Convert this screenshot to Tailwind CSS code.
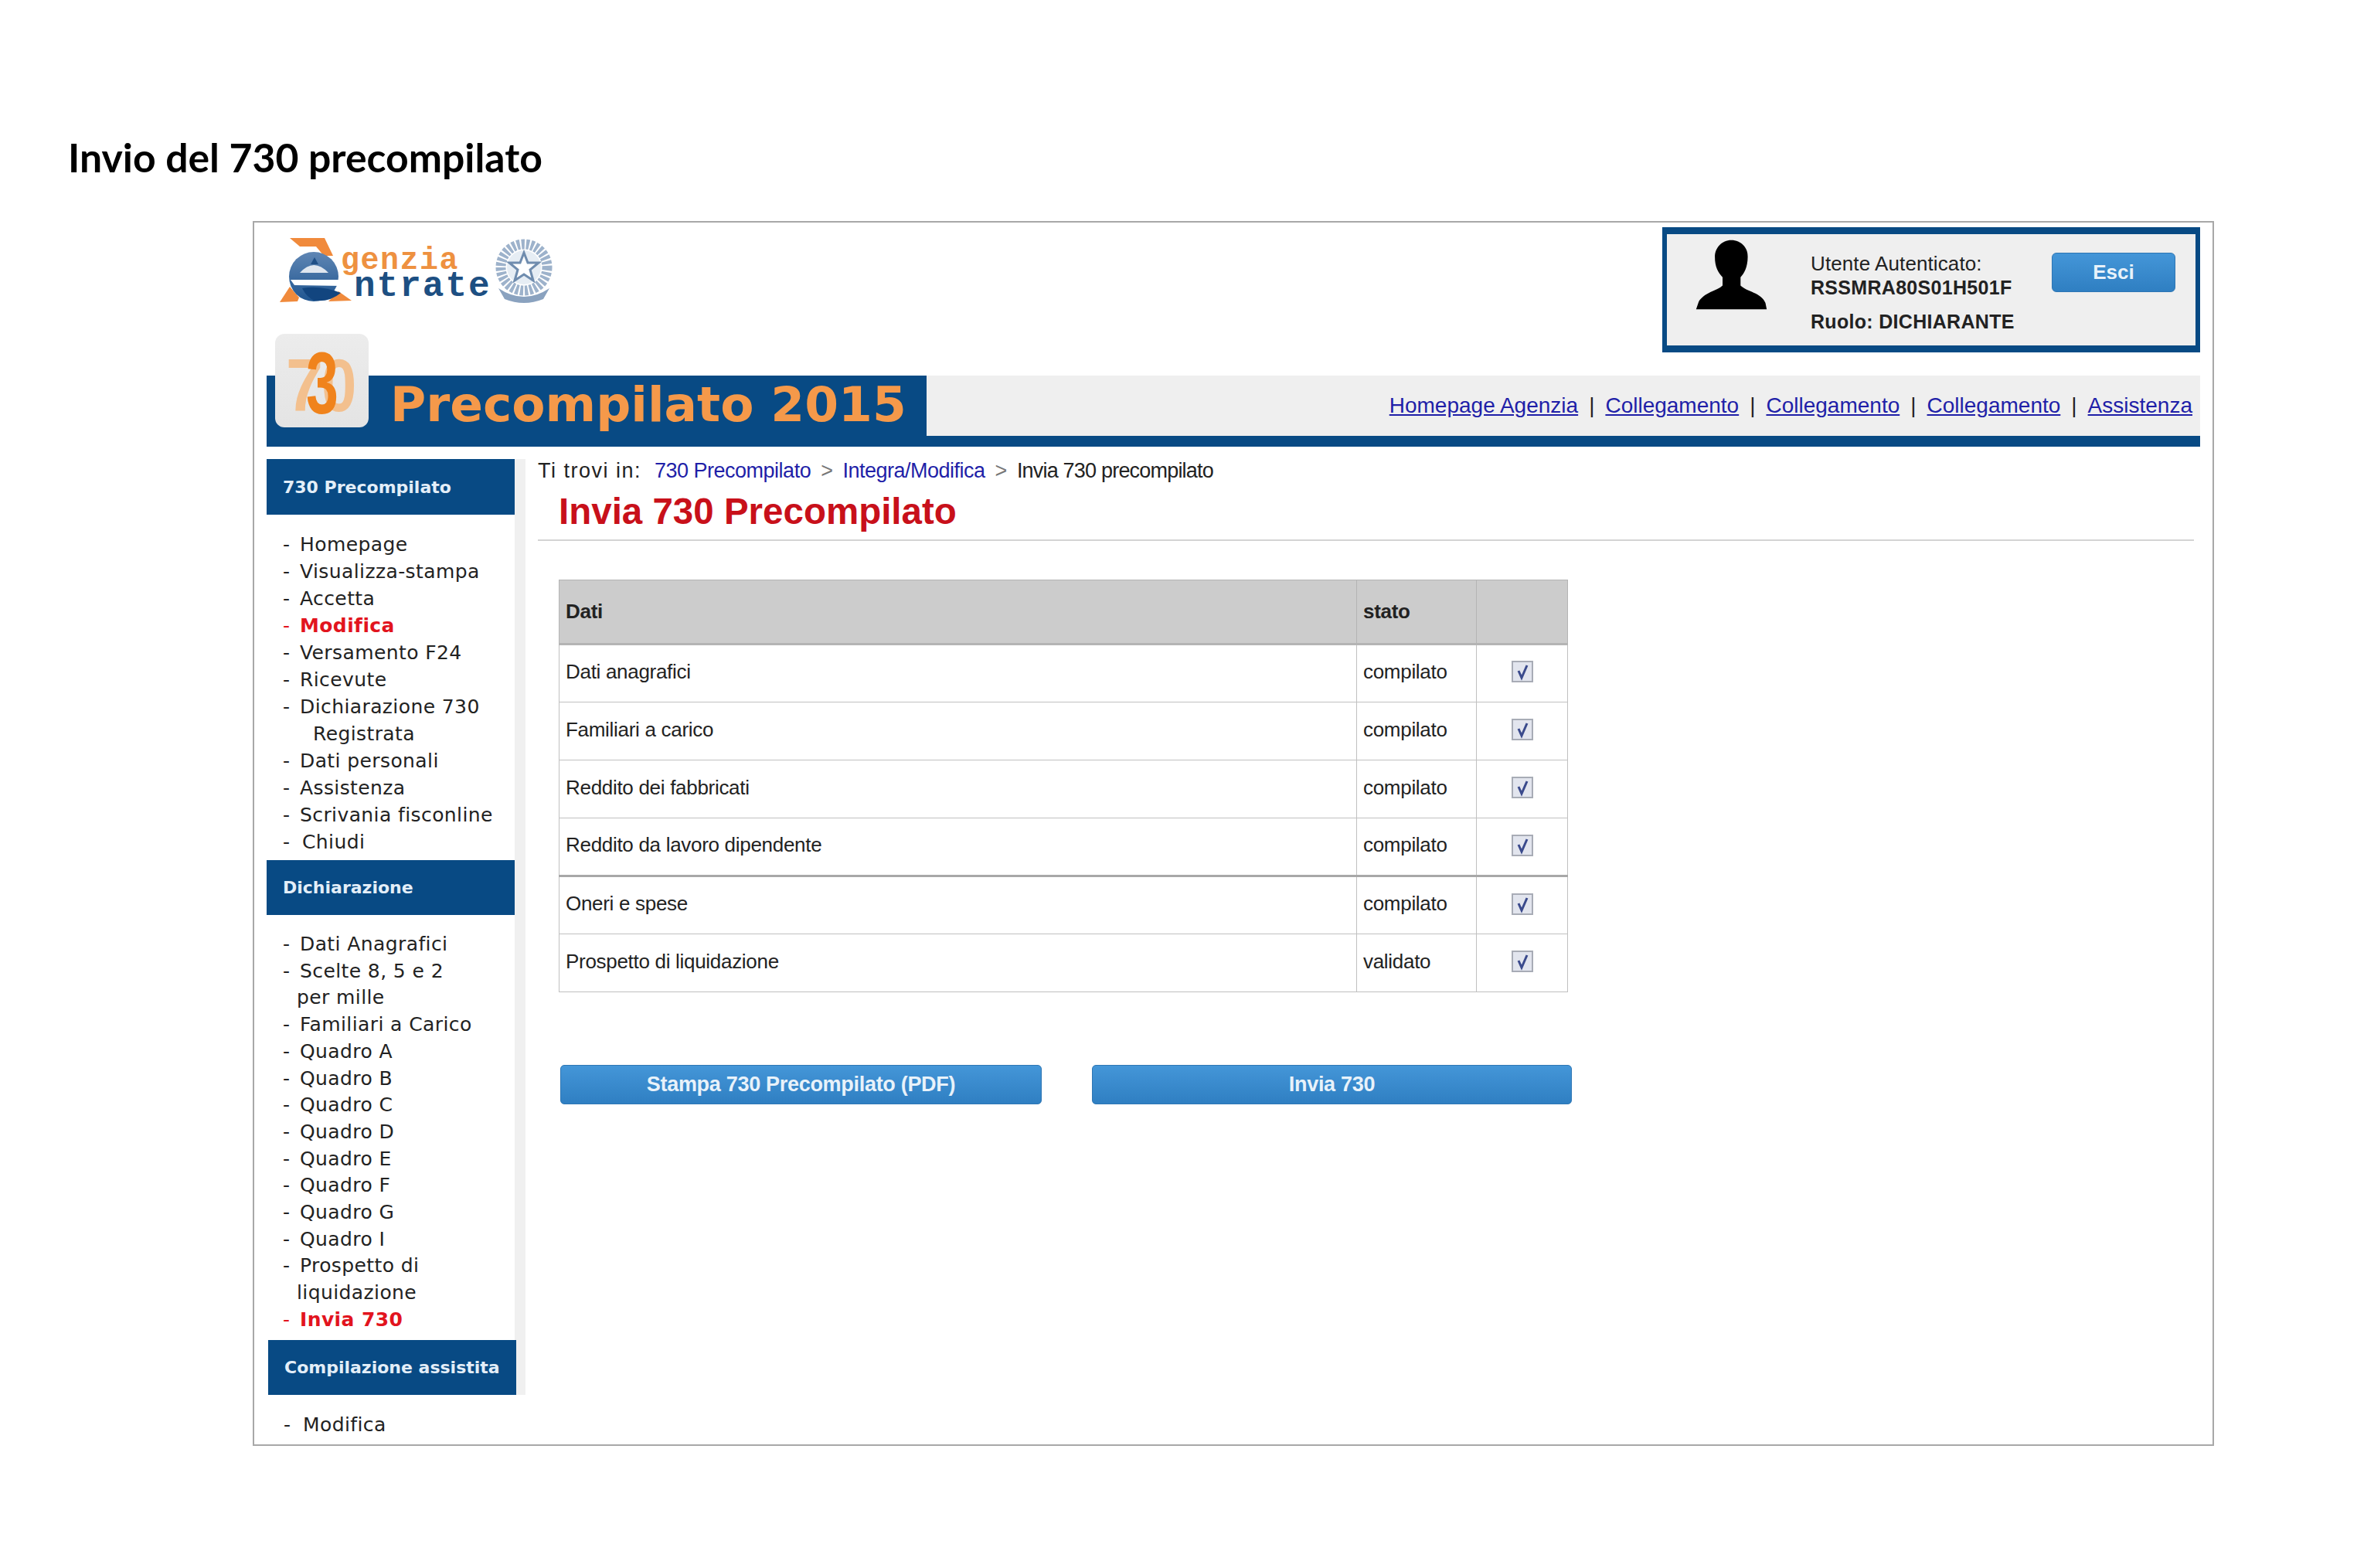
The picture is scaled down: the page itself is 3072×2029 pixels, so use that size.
<!DOCTYPE html>
<html lang="it">
<head>
    <meta charset="UTF-8" />
    <title>Invio del 730 precompilato</title>
    <script src="https://cdn.jsdelivr.net/npm/@tailwindcss/browser@4"></script>
</head>
<body class="bg-white w-[3072px] h-[2029px] overflow-hidden font-['Liberation_Sans',sans-serif] text-[#222]">

<h1 class="h-[286px] pl-[88px] pt-[168px] font-['Lato',sans-serif] font-bold text-[51.7px] leading-[70px] text-black">Invio del 730 precompilato</h1>

<div class="ml-[327px] w-[2538px] h-[1585px] border-2 border-[#a8a8a8] px-4">

    <!-- intestazione -->
    <div class="flex justify-between items-start h-[198px] pt-[6px]">
        <svg class="mt-px" width="390" height="115" viewBox="0 0 390 115">
            <defs>
                <linearGradient id="globo" x1="0" y1="0" x2="0" y2="1">
                    <stop offset="0" stop-color="#5f86b4"/>
                    <stop offset="1" stop-color="#1f5590"/>
                </linearGradient>
            </defs>
            <polygon points="30,13 75,13 86,36 74,36 64,24 43,24" fill="#f08a3c"/>
            <polygon points="17,96 30,76 42,90 40,95" fill="#f08a3c"/>
            <polygon points="93,82 110,94 80,95" fill="#f08a3c"/>
            <circle cx="61" cy="63" r="32" fill="url(#globo)"/>
            <path d="M43 58 Q61 38 80 58 Z" fill="#dfe6ef"/>
            <polygon points="62,38 67,47 57,47" fill="#1f4f86"/>
            <path d="M31 67 L97 67 L97 75 L36 74 Z" fill="#ffffff"/>
            <path d="M46 78 Q70 74 96 84 Q82 96 62 94 Q52 90 46 78 Z" fill="#12457f"/>
            <text x="96" y="53" font-family="Liberation Mono" font-weight="700" font-size="40" letter-spacing="1.5" fill="#ee9140">genzia</text>
            <text x="113" y="88" font-family="Liberation Mono" font-weight="700" font-size="46" letter-spacing="2" fill="#1d4f82">ntrate</text>
            <circle cx="333" cy="51" r="30" fill="none" stroke="#9db2cb" stroke-width="13" stroke-dasharray="4 2"/>
            <circle cx="333" cy="51" r="22" fill="#e6edf4"/>
            <polygon points="333,32 338,45 352,45 341,54 345,68 333,60 321,68 325,54 314,45 328,45" fill="#fff" stroke="#6f8cae" stroke-width="3"/>
            <path d="M300 78 Q333 100 366 78 L358 92 Q333 102 308 92 Z" fill="#8aa2bf"/>
        </svg>

        <div class="w-[696px] h-[162px] border-x-[6px] border-y-[9px] border-[#084a84] bg-[#efefef] flex items-start">
            <svg class="ml-[36px] mt-[6px]" width="95" height="93" viewBox="70 40 285 280">
                <path d="M212 45 C250 45 278 75 276 110 C276 150 262 175 248 190 L248 222 C270 245 330 250 345 290 L350 315 L75 315 L85 285 C105 250 160 240 178 222 L178 190 C160 170 148 150 148 110 C148 75 175 45 212 45 Z" fill="#000"/>
            </svg>
            <div class="ml-[55px] mt-[23px] text-[26px] leading-[31px] text-[#222]">
                <div class="tracking-[0.1px]">Utente Autenticato:</div>
                <div class="font-bold text-[25px] tracking-[0.3px]">RSSMRA80S01H501F</div>
                <div class="mt-[13px] font-bold text-[25px] tracking-[0.3px]">Ruolo: DICHIARANTE</div>
            </div>
            <button class="ml-auto mr-[26px] mt-[24px] w-[160px] h-[51px] rounded-[6px] bg-linear-to-b from-[#4496d8] to-[#2f7fc2] border border-[#2e76b4] text-[#e8f2fa] font-bold text-[26px]">Esci</button>
        </div>
    </div>

    <!-- banner -->
    <div class="relative flex h-[92px]">
        <div class="w-[854px] bg-[#084a84] pl-[160px] font-['DejaVu_Sans',sans-serif] font-bold text-[63px] leading-[76px] text-[#f5994a]">Precompilato 2015</div>
        <div class="flex-1 bg-[#efefef] border-b-[14px] border-[#084a84] flex items-center justify-end pr-[10px] gap-[14px] text-[28px] text-[#222]">
            <a href="#" class="underline text-[#1f1fa8]">Homepage Agenzia</a><span>|</span>
            <a href="#" class="underline text-[#1f1fa8]">Collegamento</a><span>|</span>
            <a href="#" class="underline text-[#1f1fa8]">Collegamento</a><span>|</span>
            <a href="#" class="underline text-[#1f1fa8]">Collegamento</a><span>|</span>
            <a href="#" class="underline text-[#1f1fa8]">Assistenza</a>
        </div>
        <div class="absolute left-[11px] top-[-54px] w-[121px] h-[121px] rounded-[12px] bg-linear-to-b from-[#ececec] to-[#e4e4e4]">
            <svg width="121" height="121" viewBox="0 0 121 121" font-family="Liberation Sans" font-weight="700">
                <text transform="translate(14 100) scale(0.9 1)" font-size="96" fill="#f3c08e">7</text>
                <text transform="translate(60 100) scale(0.85 1)" font-size="96" fill="#f3c08e">0</text>
                <text transform="translate(40 103) scale(0.66 1)" font-size="114" fill="#f0831c">3</text>
            </svg>
        </div>
    </div>

    <div class="flex mt-4">
        <!-- menu laterale -->
        <div class="w-[335px] shrink-0 font-['DejaVu_Sans',sans-serif] text-[25px] tracking-[0.4px] leading-[35px] text-[#222]">
            <div class="border-r-[14px] border-[#f0f0f0]">
                <div class="h-[72px] w-[321px] bg-[#084a84] pl-[21px] flex items-center font-bold text-[22px] tracking-normal text-[#e3eef8]">730 Precompilato</div>
                <ul class="pt-[21px] pb-[6px] pl-[21px]">
                    <li class="flex"><span class="w-[22px]">-</span>Homepage</li>
                    <li class="flex"><span class="w-[22px]">-</span>Visualizza-stampa</li>
                    <li class="flex"><span class="w-[22px]">-</span>Accetta</li>
                    <li class="flex font-bold text-[#e2141e]"><span class="w-[22px] font-normal">-</span>Modifica</li>
                    <li class="flex"><span class="w-[22px]">-</span>Versamento F24</li>
                    <li class="flex"><span class="w-[22px]">-</span>Ricevute</li>
                    <li class="flex"><span class="w-[22px]">-</span>Dichiarazione 730</li>
                    <li class="pl-[39px]">Registrata</li>
                    <li class="flex"><span class="w-[22px]">-</span>Dati personali</li>
                    <li class="flex"><span class="w-[22px]">-</span>Assistenza</li>
                    <li class="flex"><span class="w-[22px]">-</span>Scrivania fisconline</li>
                    <li class="flex"><span class="w-[25px]">-</span>Chiudi</li>
                </ul>
                <div class="h-[71px] w-[321px] bg-[#084a84] pl-[21px] flex items-center font-bold text-[22px] tracking-normal text-[#e3eef8]">Dichiarazione</div>
                <ul class="pt-[21px] pb-[8px] pl-[21px] leading-[34.7px]">
                    <li class="flex"><span class="w-[22px]">-</span>Dati Anagrafici</li>
                    <li class="flex"><span class="w-[22px]">-</span>Scelte 8, 5 e 2</li>
                    <li class="pl-[18px]">per mille</li>
                    <li class="flex"><span class="w-[22px]">-</span>Familiari a Carico</li>
                    <li class="flex"><span class="w-[22px]">-</span>Quadro A</li>
                    <li class="flex"><span class="w-[22px]">-</span>Quadro B</li>
                    <li class="flex"><span class="w-[22px]">-</span>Quadro C</li>
                    <li class="flex"><span class="w-[22px]">-</span>Quadro D</li>
                    <li class="flex"><span class="w-[22px]">-</span>Quadro E</li>
                    <li class="flex"><span class="w-[22px]">-</span>Quadro F</li>
                    <li class="flex"><span class="w-[22px]">-</span>Quadro G</li>
                    <li class="flex"><span class="w-[22px]">-</span>Quadro I</li>
                    <li class="flex"><span class="w-[22px]">-</span>Prospetto di</li>
                    <li class="pl-[18px]">liquidazione</li>
                    <li class="flex font-bold text-[#e2141e]"><span class="w-[22px] font-normal">-</span>Invia 730</li>
                </ul>
                <div class="h-[71px] w-[321px] ml-[2px] mb-[7px] bg-[#084a84] pl-[21px] flex items-center font-bold text-[22px] tracking-normal text-[#e3eef8]">Compilazione assistita</div>
            </div>
            <div class="mt-[21px] pl-[22px] flex"><span class="w-[25px]">-</span>Modifica</div>
        </div>

        <!-- contenuto -->
        <div class="flex-1 pl-4 pr-2">
            <div class="h-[30px] text-[27px] leading-[30px] tracking-[-0.5px]">
                <span class="mr-[10px] tracking-[1.5px]">Ti trovi in:</span>
                <a href="#" class="text-[#1f1fa8]">730 Precompilato</a>
                <span class="mx-[6px] text-[#777]">&gt;</span>
                <a href="#" class="text-[#1f1fa8]">Integra/Modifica</a>
                <span class="mx-[6px] text-[#777]">&gt;</span>
                <span class="tracking-[-0.8px]">Invia 730 precompilato</span>
            </div>
            <h2 class="mt-[10px] h-[66px] pl-[27px] border-b-2 border-[#d4d4d4] font-bold text-[47.5px] leading-[56px] text-[#c8101a]">Invia 730 Precompilato</h2>

            <div class="ml-[27px] mt-[50px] w-[1305px]">
                <table class="w-full table-fixed border-collapse text-[26px] tracking-[-0.3px] text-[#222]">
                    <colgroup><col class="w-[1032px]"/><col class="w-[155px]"/><col class="w-[118px]"/></colgroup>
                    <thead>
                        <tr class="h-[83px] bg-[#cccccc] font-bold">
                            <th class="border border-[#b4b4b4] border-b-[3px] px-2 text-left">Dati</th>
                            <th class="border border-[#b4b4b4] border-b-[3px] px-2 text-left">stato</th>
                            <th class="border border-[#b4b4b4] border-b-[3px]"></th>
                        </tr>
                    </thead>
                    <tbody>
                        <tr class="h-[75px]">
                            <td class="border border-[#c0c0c0] px-2 pb-1">Dati anagrafici</td>
                            <td class="border border-[#c0c0c0] px-2 pb-1">compilato</td>
                            <td class="border border-[#c0c0c0] pb-[6px]"><svg class="mx-auto" width="28" height="28" viewBox="0 0 28 28"><rect x="1" y="1" width="26" height="26" fill="#e2e5ee" stroke="#a8acb6" stroke-width="2"/><path d="M9 13 L13 22 L20 6" fill="none" stroke="#3a4a8c" stroke-width="3"/></svg></td>
                        </tr>
                        <tr class="h-[75px]">
                            <td class="border border-[#c0c0c0] px-2 pb-1">Familiari a carico</td>
                            <td class="border border-[#c0c0c0] px-2 pb-1">compilato</td>
                            <td class="border border-[#c0c0c0] pb-1"><svg class="mx-auto" width="28" height="28" viewBox="0 0 28 28"><rect x="1" y="1" width="26" height="26" fill="#e2e5ee" stroke="#a8acb6" stroke-width="2"/><path d="M9 13 L13 22 L20 6" fill="none" stroke="#3a4a8c" stroke-width="3"/></svg></td>
                        </tr>
                        <tr class="h-[75px]">
                            <td class="border border-[#c0c0c0] px-2 pb-1">Reddito dei fabbricati</td>
                            <td class="border border-[#c0c0c0] px-2 pb-1">compilato</td>
                            <td class="border border-[#c0c0c0] pb-1"><svg class="mx-auto" width="28" height="28" viewBox="0 0 28 28"><rect x="1" y="1" width="26" height="26" fill="#e2e5ee" stroke="#a8acb6" stroke-width="2"/><path d="M9 13 L13 22 L20 6" fill="none" stroke="#3a4a8c" stroke-width="3"/></svg></td>
                        </tr>
                        <tr class="h-[75px]">
                            <td class="border border-[#c0c0c0] border-b-[3px] border-b-[#a8a8a8] px-2 pb-1">Reddito da lavoro dipendente</td>
                            <td class="border border-[#c0c0c0] border-b-[3px] border-b-[#a8a8a8] px-2 pb-1">compilato</td>
                            <td class="border border-[#c0c0c0] border-b-[3px] border-b-[#a8a8a8] pb-1"><svg class="mx-auto" width="28" height="28" viewBox="0 0 28 28"><rect x="1" y="1" width="26" height="26" fill="#e2e5ee" stroke="#a8acb6" stroke-width="2"/><path d="M9 13 L13 22 L20 6" fill="none" stroke="#3a4a8c" stroke-width="3"/></svg></td>
                        </tr>
                        <tr class="h-[75px]">
                            <td class="border border-[#c0c0c0] px-2 pb-1">Oneri e spese</td>
                            <td class="border border-[#c0c0c0] px-2 pb-1">compilato</td>
                            <td class="border border-[#c0c0c0] pb-1"><svg class="mx-auto" width="28" height="28" viewBox="0 0 28 28"><rect x="1" y="1" width="26" height="26" fill="#e2e5ee" stroke="#a8acb6" stroke-width="2"/><path d="M9 13 L13 22 L20 6" fill="none" stroke="#3a4a8c" stroke-width="3"/></svg></td>
                        </tr>
                        <tr class="h-[75px]">
                            <td class="border border-[#c0c0c0] px-2 pb-1">Prospetto di liquidazione</td>
                            <td class="border border-[#c0c0c0] px-2 pb-1">validato</td>
                            <td class="border border-[#c0c0c0] pb-1"><svg class="mx-auto" width="28" height="28" viewBox="0 0 28 28"><rect x="1" y="1" width="26" height="26" fill="#e2e5ee" stroke="#a8acb6" stroke-width="2"/><path d="M9 13 L13 22 L20 6" fill="none" stroke="#3a4a8c" stroke-width="3"/></svg></td>
                        </tr>
                    </tbody>
                </table>
            </div>

            <div class="ml-[29px] mt-[94px] flex gap-[65px]">
                <button class="w-[623px] h-[51px] rounded-[5px] bg-linear-to-b from-[#4496d8] to-[#2f7fc2] border border-[#2e76b4] text-[#e8f2fa] font-bold text-[27px] tracking-[-0.3px]">Stampa 730 Precompilato (PDF)</button>
                <button class="w-[621px] h-[51px] rounded-[5px] bg-linear-to-b from-[#4496d8] to-[#2f7fc2] border border-[#2e76b4] text-[#e8f2fa] font-bold text-[27px] tracking-[-0.3px]">Invia 730</button>
            </div>
        </div>
    </div>
</div>

</body>
</html>
